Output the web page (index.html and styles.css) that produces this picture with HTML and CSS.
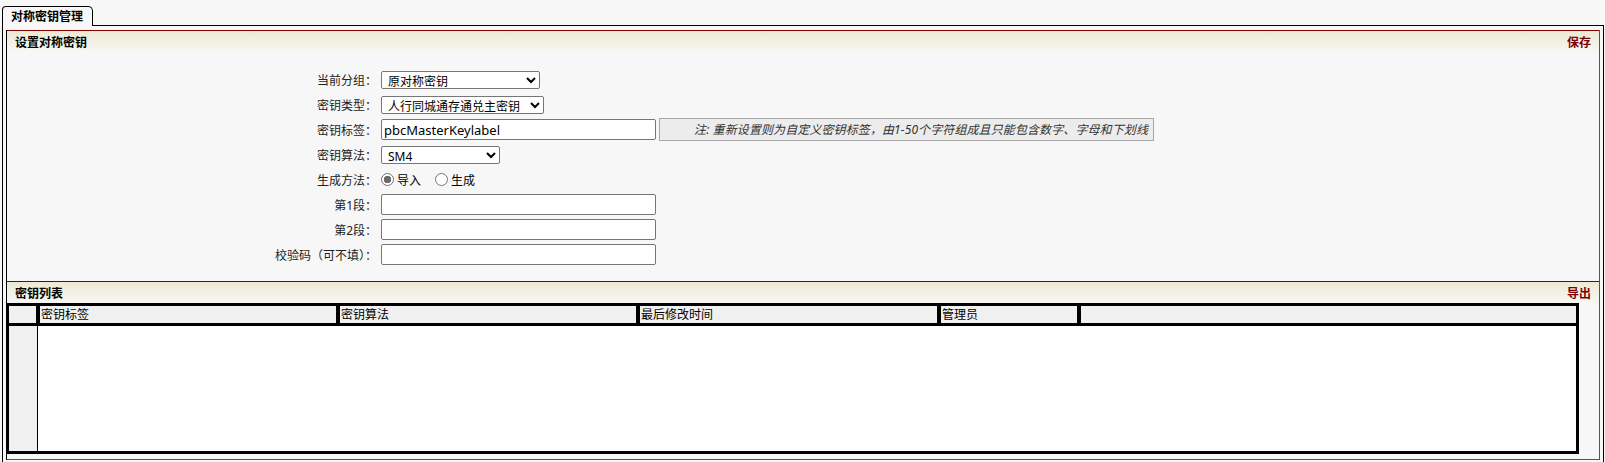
FILE: index.html
```html
<!DOCTYPE html>
<html lang="zh-CN">
<head>
<meta charset="utf-8">
<title>对称密钥管理</title>
<link rel="stylesheet" href="styles.css">
</head>
<body>
<div class="page">
  <div class="tabstrip">
    <div class="tab">对称密钥管理</div>
    <div class="tabfill"></div>
  </div>
  <div class="frame">
    <div class="panel">
      <div class="phead">
        <span class="ptitle">设置对称密钥</span>
        <span class="paction">保存</span>
      </div>
      <div class="form">
        <label class="lbl">当前分组：</label>
        <div class="ctl"><select class="sel sel-group"><option>原对称密钥</option></select></div>

        <label class="lbl">密钥类型：</label>
        <div class="ctl"><select class="sel sel-type"><option>人行同城通存通兑主密钥</option></select></div>

        <label class="lbl">密钥标签：</label>
        <div class="ctl ctl-note">
          <input class="txt" type="text" value="pbcMasterKeylabel">
          <div class="note">注: 重新设置则为自定义密钥标签，由1-50个字符组成且只能包含数字、字母和下划线</div>
        </div>

        <label class="lbl">密钥算法：</label>
        <div class="ctl"><select class="sel sel-alg"><option>SM4</option></select></div>

        <label class="lbl">生成方法：</label>
        <div class="ctl radios">
          <label class="rad"><input type="radio" name="gen" checked><span>导入</span></label>
          <label class="rad"><input type="radio" name="gen"><span>生成</span></label>
        </div>

        <label class="lbl">第1段：</label>
        <div class="ctl"><input class="txt" type="text"></div>

        <label class="lbl">第2段：</label>
        <div class="ctl"><input class="txt" type="text"></div>

        <label class="lbl">校验码（可不填）：</label>
        <div class="ctl"><input class="txt" type="text"></div>
      </div>

      <div class="phead">
        <span class="ptitle">密钥列表</span>
        <span class="paction">导出</span>
      </div>
      <div class="grid">
        <div class="thead">
          <div class="th th-idx"></div>
          <div class="th th-c1">密钥标签</div>
          <div class="th th-c2">密钥算法</div>
          <div class="th th-c3">最后修改时间</div>
          <div class="th th-c4">管理员</div>
          <div class="th th-c5"></div>
        </div>
        <div class="tbody">
          <div class="idx-col"></div>
          <div class="rows"></div>
        </div>
      </div>
    </div>
  </div>
</div>
</body>
</html>
```

FILE: styles.css
```css
* { box-sizing: border-box; }
html, body { margin: 0; padding: 0; }
body {
  background: #f7f7f7;
  font-family: "Noto Sans", "Noto Sans CJK SC", sans-serif;
  font-size: 12px;
  color: #000;
}
.page {
  width: 1605px;
  height: 462px;
  padding: 6px 1px 0 2px;
  overflow: hidden;
}
.tabstrip {
  display: flex;
  height: 20px;
}
.tab {
  width: 91px;
  height: 20px;
  border: 1px solid #000;
  border-bottom: none;
  border-radius: 4px 5px 0 0;
  background: #f7f7f7;
  font-weight: bold;
  line-height: 19px;
  padding: 0 0 0 8px;
  white-space: nowrap;
}
.tabfill {
  flex: 1;
  border-bottom: 1px solid #000;
}
.frame {
  height: 436px;
  border-left: 1px solid #000;
  border-right: 1px solid #000;
  padding: 4px 3px 2px 3px;
}
.panel {
  height: 430px;
  border-left: 1px solid #000;
  border-right: 1px solid #555;
  border-bottom: 1px solid #555;
  padding-bottom: 5px;
}
.phead {
  display: flex;
  justify-content: space-between;
  align-items: center;
  height: 22px;
  border-top: 1px solid #800000;
  background: linear-gradient(#ecead4, #f7f7f5);
  padding: 0 8px;
  font-weight: bold;
}
.paction { color: #800000; }

.form {
  display: grid;
  grid-template-columns: 370px 1fr;
  grid-auto-rows: 25px;
  column-gap: 4px;
  align-items: center;
  padding: 15px 0 14px 0;
}
.lbl {
  text-align: right;
  color: #222;
  white-space: nowrap;
}
.ctl { display: flex; align-items: center; }
.ctl-note { gap: 3px; }
.sel {
  height: 18px;
  font-family: "Noto Sans", "Noto Sans CJK SC", sans-serif;
  font-size: 12px;
  padding: 0 0 0 2px;
  border: 1px solid #767676;
  border-radius: 2px;
  background: #fff;
  color: #000;
}
.sel-group { width: 159px; }
.sel-type { width: 163px; }
.sel-alg { width: 119px; }
.txt {
  width: 275px;
  height: 21px;
  border: 1px solid #767676;
  border-radius: 2px;
  background: #fff;
  padding: 0 2px;
  font-family: "Noto Sans", "Noto Sans CJK SC", sans-serif;
  font-size: 13px;
  color: #000;
}
.note {
  width: 495px;
  height: 23px;
  border: 1px solid #a8a8a8;
  background: #ececec;
  color: #333;
  font-style: italic;
  text-align: right;
  line-height: 21px;
  padding-right: 5px;
  letter-spacing: 0.1px;
  white-space: nowrap;
}
.radios { gap: 0; }
.rad { display: flex; align-items: center; }
.rad + .rad { margin-left: 14px; }
.rad input {
  appearance: none;
  -webkit-appearance: none;
  width: 13px;
  height: 13px;
  margin: 0 3px 0 0;
  border: 1px solid #767676;
  border-radius: 50%;
  background: #fff;
}
.rad input:checked {
  background: radial-gradient(circle, #6b6b6b 0 3.5px, #fff 4px);
}

.grid {
  width: 1573px;
  height: 151px;
  border: 3px solid #000;
  background: #000;
  margin-left: -1px;
}
.thead {
  display: flex;
  gap: 4px;
  height: 17px;
}
.th {
  background: #f0f0f0;
  line-height: 17px;
  padding-left: 1px;
  white-space: nowrap;
}
.th-idx { width: 27px; }
.th-c1, .th-c2 { width: 296px; }
.th-c3 { width: 297px; }
.th-c4 { width: 136px; }
.th-c5 { flex: 1; }
.tbody {
  display: flex;
  height: 125px;
  margin-top: 3px;
}
.idx-col {
  width: 29px;
  background: #f0f0f0;
  border-right: 1px solid #000;
}
.rows {
  flex: 1;
  background: #fff;
}
```
